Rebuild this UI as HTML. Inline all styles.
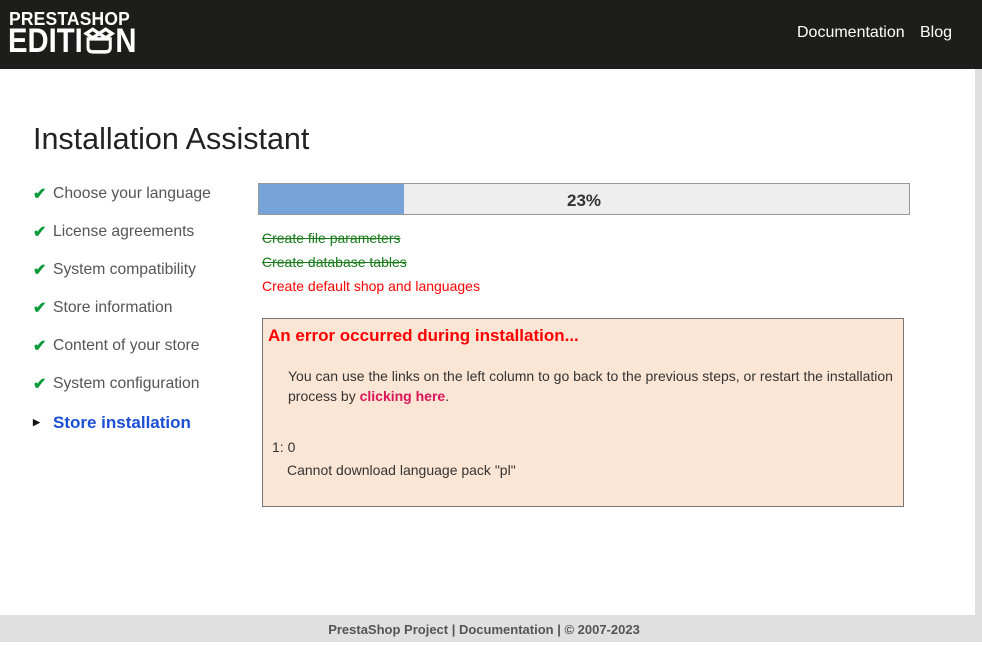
<!DOCTYPE html>
<html><head><meta charset="utf-8">
<style>
*{margin:0;padding:0;box-sizing:border-box}
body{width:982px;height:642px;overflow:hidden;background:#fff;font-family:"Liberation Sans",sans-serif;position:relative}
.hdr{position:absolute;left:0;top:0;width:982px;height:69px;background:#1d1d1b}
.logo1{position:absolute;left:9px;top:9px;color:#fff;font-weight:900;font-size:18px;letter-spacing:0.2px;transform:scaleX(0.97);transform-origin:left}
.logo2{position:absolute;left:8px;top:22px;color:#fff;font-weight:900;font-size:34px;letter-spacing:0px;transform:scaleX(0.86);transform-origin:left;white-space:nowrap}
.nav{position:absolute;top:24px;color:#fff;font-size:16px}
.strip{position:absolute;left:975px;top:69px;width:7px;height:573px;background:#e0e0e0}
.foot{position:absolute;left:0;top:615px;width:982px;height:27px;background:#e0e0e0;color:#555;font-size:13px;font-weight:bold;text-align:center;line-height:30px;padding-right:14px}
h1{position:absolute;left:33px;top:122px;font-weight:normal;font-size:30.5px;color:#222}
.side{position:absolute;left:33px;top:185px}
.side div{height:38px;font-size:15.7px;color:#555;position:relative;padding-left:20px}
.side .ck{position:absolute;left:0;top:-1px;color:#0a9a3a;font-weight:bold;font-size:16px}
.side .cur{color:#1a4fd6;font-weight:bold;font-size:17px}
.bar{position:absolute;left:258px;top:183px;width:652px;height:32px;border:1px solid #999;background:#eee}
.fill{position:absolute;left:0;top:0;width:145px;height:30px;background:#76a4d9}
.pct{position:absolute;left:0;width:650px;top:7px;text-align:center;font-weight:bold;font-size:17px;color:#333}
.st{position:absolute;left:262px;font-size:14px}
.err{position:absolute;left:262px;top:318px;width:642px;height:189px;border:1px solid #777;background:#fbe6d6;color:#333;font-size:14px}
</style></head><body>
<div class="hdr">
<div class="logo1">PRESTASHOP</div>
<div class="logo2">EDITI<svg width="38" height="28" viewBox="0 0 34 26" style="vertical-align:-2px"><g fill="none" stroke="#fff" stroke-width="3.2"><path d="M5 12 L5 20 Q5 24 10 24 L24 24 Q29 24 29 20 L29 12 Z"/><path d="M3 7 L10 3 L17 7 L10 11 Z M17 7 L24 3 L31 7 L24 11 Z"/></g></svg>N</div>
<div class="nav" style="left:797px">Documentation</div>
<div class="nav" style="left:920px">Blog</div>
</div>
<div class="strip"></div>
<h1>Installation Assistant</h1>
<div class="side">
<div><span class="ck">✔</span>Choose your language</div>
<div><span class="ck">✔</span>License agreements</div>
<div><span class="ck">✔</span>System compatibility</div>
<div><span class="ck">✔</span>Store information</div>
<div><span class="ck">✔</span>Content of your store</div>
<div><span class="ck">✔</span>System configuration</div>
<div><span class="ck" style="color:#111;font-size:9px;top:4px">▶</span><span class="cur">Store installation</span></div>
</div>
<div class="bar"><div class="fill"></div><div class="pct">23%</div></div>
<div class="st" style="top:230px;color:#197a19;text-decoration:line-through">Create file parameters</div>
<div class="st" style="top:254px;color:#197a19;text-decoration:line-through">Create database tables</div>
<div class="st" style="top:278px;color:#f00">Create default shop and languages</div>
<div class="err">
<div style="position:absolute;left:5px;top:7px;color:#f00;font-weight:bold;font-size:17px">An error occurred during installation...</div>
<div style="position:absolute;left:25px;top:47px;line-height:20px;width:610px">You can use the links on the left column to go back to the previous steps, or restart the installation process by <b style="color:#d9145a">clicking here</b>.</div>
<div style="position:absolute;left:9px;top:120px">1: 0</div>
<div style="position:absolute;left:24px;top:143px">Cannot download language pack "pl"</div>
</div>
<div class="foot">PrestaShop Project | Documentation | © 2007-2023</div>
</body></html>
